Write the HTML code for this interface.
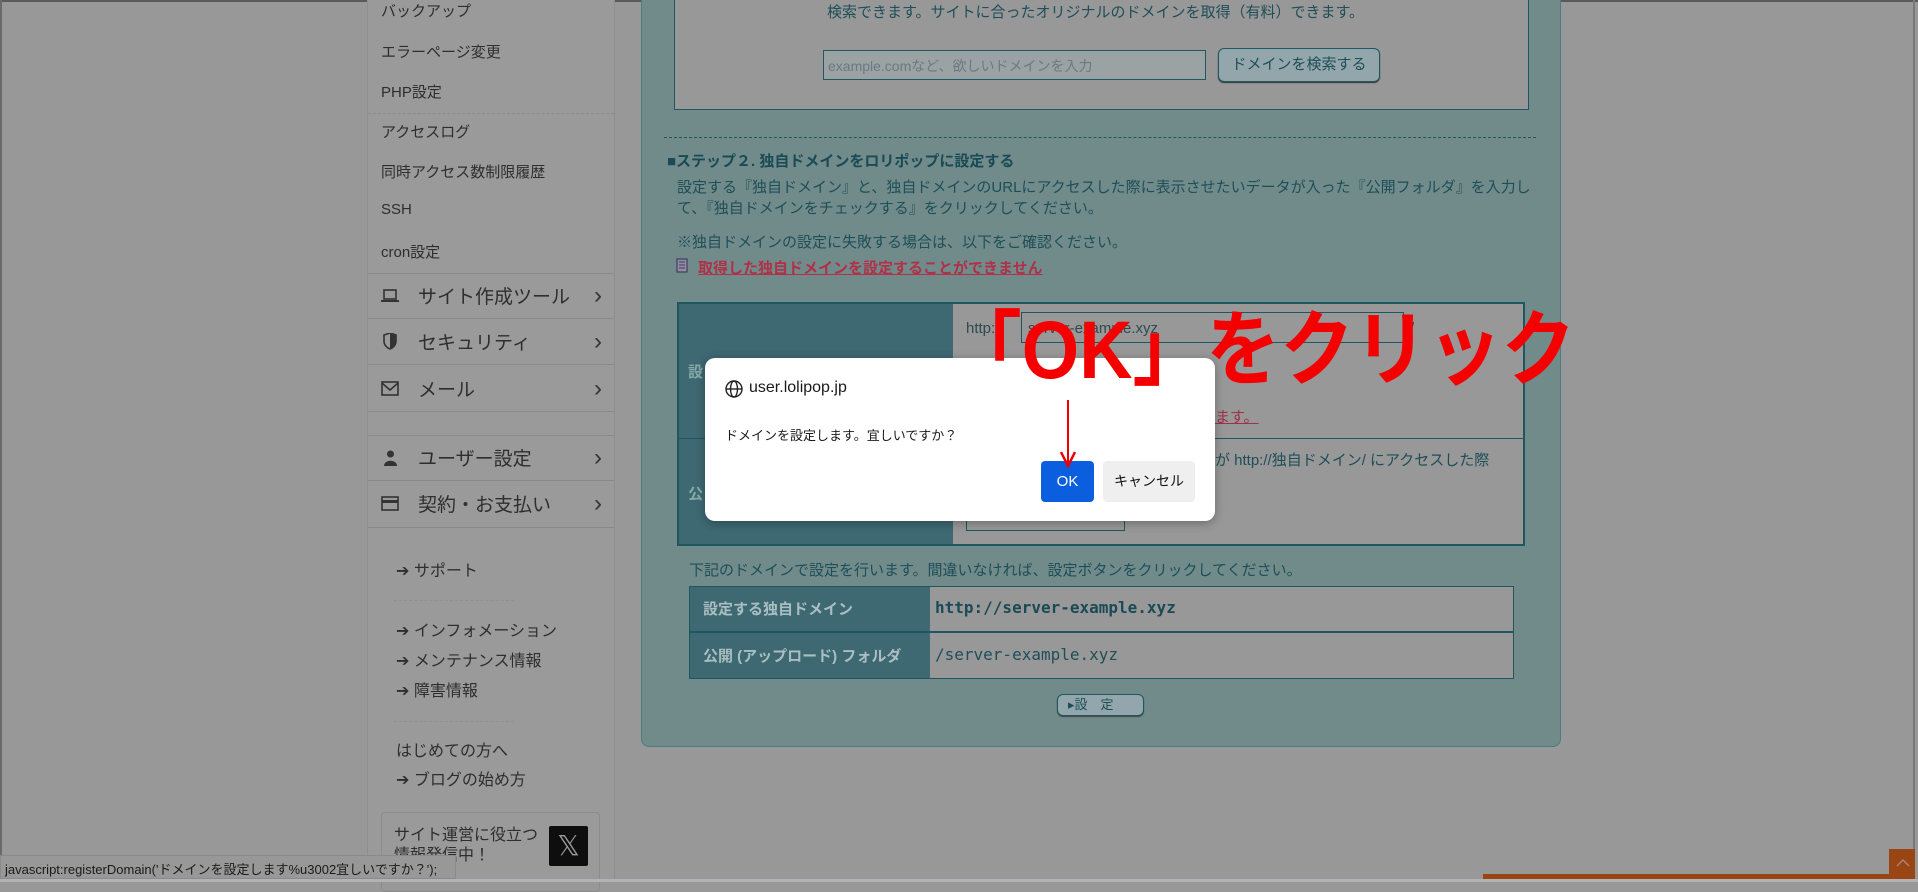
<!DOCTYPE html>
<html><head><meta charset="utf-8"><style>
*{margin:0;padding:0;box-sizing:border-box}
body{width:1918px;height:882px;overflow:hidden;background:#989898;font-family:"Liberation Sans","Noto Sans CJK JP",sans-serif;position:relative;color:#333}
.a{position:absolute;white-space:nowrap}
.side{position:absolute;left:367px;top:0;width:248px;height:882px;background:#9a9a9a;border-left:1px solid #8e8e8e;border-right:1px solid #8e8e8e}
.si{position:absolute;left:13px;font-size:15px;color:#2e2e2e}
.bi{position:absolute;left:50px;font-size:19px;color:#2e2e2e}
.ln{position:absolute;left:0;width:246px;border-top:1px solid #8a8a8a}
.chev{position:absolute;left:226px;font-size:24px;line-height:24px;color:#333}
.sm{position:absolute;left:28px;font-size:16px;color:#2e2e2e}
.dlg{position:absolute;left:705px;top:358px;width:510px;height:163px;background:#fff;border-radius:10px;box-shadow:0 2px 10px rgba(0,0,0,.3)}
</style></head><body>
<div style="position:absolute;left:0;top:0;width:1918px;height:2px;background:#5a5a5a"></div>
<div style="position:absolute;left:0;top:0;width:2px;height:882px;background:#6a6a6a"></div>
<div style="position:absolute;right:3px;top:0;width:2px;height:882px;background:#7a7a7a"></div>
<div class="side">
 <div class="si" style="top:0">バックアップ</div>
 <div class="si" style="top:41px">エラーページ変更</div>
 <div class="si" style="top:81px">PHP設定</div>
 <div class="ln" style="top:113px;border-top:1px dashed #8a8a8a"></div>
 <div class="si" style="top:121px">アクセスログ</div>
 <div class="si" style="top:161px">同時アクセス数制限履歴</div>
 <div class="si" style="top:201px">SSH</div>
 <div class="si" style="top:241px">cron設定</div>
 <div class="ln" style="top:273px"></div>
 <svg class="a" style="left:13px;top:289px" width="18" height="14"><rect x="3" y="1" width="12" height="9" fill="none" stroke="#333" stroke-width="1.6"/><rect x="0" y="11" width="18" height="2" fill="#333"/></svg>
 <div class="bi" style="top:282px">サイト作成ツール</div><div class="chev" style="top:284px">›</div>
 <div class="ln" style="top:318px"></div>
 <svg class="a" style="left:15px;top:333px" width="14" height="17"><path d="M1 2 L7 0 L13 2 L13 8 C13 12 10 15 7 16 C4 15 1 12 1 8Z" fill="none" stroke="#333" stroke-width="1.6"/><path d="M7 1 L13 2.5 L13 8 C13 12 10 15 7 16Z" fill="#333"/></svg>
 <div class="bi" style="top:328px">セキュリティ</div><div class="chev" style="top:330px">›</div>
 <div class="ln" style="top:364px"></div>
 <svg class="a" style="left:13px;top:381px" width="18" height="15"><rect x="1" y="1" width="16" height="13" fill="none" stroke="#333" stroke-width="1.6"/><path d="M1 2 L9 9 L17 2" fill="none" stroke="#333" stroke-width="1.6"/></svg>
 <div class="bi" style="top:375px">メール</div><div class="chev" style="top:377px">›</div>
 <div class="ln" style="top:411px"></div>
 <div class="ln" style="top:435px"></div>
 <svg class="a" style="left:16px;top:450px" width="13" height="16"><circle cx="6.5" cy="4" r="3.5" fill="#333"/><path d="M0 16 C0 9 13 9 13 16Z" fill="#333"/></svg>
 <div class="bi" style="top:444px">ユーザー設定</div><div class="chev" style="top:446px">›</div>
 <div class="ln" style="top:480px"></div>
 <svg class="a" style="left:13px;top:496px" width="18" height="15"><rect x="1" y="1" width="16" height="13" fill="none" stroke="#333" stroke-width="1.6"/><rect x="1" y="4" width="16" height="3" fill="#333"/></svg>
 <div class="bi" style="top:490px">契約・お支払い</div><div class="chev" style="top:492px">›</div>
 <div class="ln" style="top:527px"></div>
 <div class="sm" style="top:557px">➔ サポート</div>
 <div class="ln" style="top:600px;left:26px;width:120px;border-top:1px dashed #909090"></div>
 <div class="sm" style="top:617px">➔ インフォメーション</div>
 <div class="sm" style="top:647px">➔ メンテナンス情報</div>
 <div class="sm" style="top:677px">➔ 障害情報</div>
 <div class="ln" style="top:721px;left:26px;width:120px;border-top:1px dashed #909090"></div>
 <div class="sm" style="top:737px">はじめての方へ</div>
 <div class="sm" style="top:766px">➔ ブログの始め方</div>
 <div class="a" style="left:13px;top:812px;width:219px;height:80px;border:1px solid #8c8c8c;border-radius:4px"></div>
 <div class="a" style="left:26px;top:826px;font-size:16px;line-height:20px;color:#2e2e2e">サイト運営に役立つ<br>情報発信中！</div>
 <div class="a" style="left:181px;top:826px;width:39px;height:40px;background:#0e0e0e;border-radius:2px;color:#9a9a9a;font-size:28px;text-align:center;line-height:40px;font-family:'DejaVu Sans',sans-serif">𝕏</div>
</div>
<!-- main panel -->
<div class="a" style="left:641px;top:-10px;width:920px;height:757px;background:#718b8b;border:1px solid #4d7c80;border-radius:0 0 8px 8px"></div>
<div class="a" style="left:674px;top:-5px;width:855px;height:115px;border:1px solid #1f5660;background:#989898"></div>
<div class="a" style="left:827px;top:1px;font-size:15px;color:#1e4e58">検索できます。サイトに合ったオリジナルのドメインを取得（有料）できます。</div>
<div class="a" style="left:823px;top:50px;width:383px;height:30px;border:1px solid #1f5660;background:#9aa2a4;font-size:14px;color:#6a7a80;padding:5px 4px">example.comなど、欲しいドメインを入力</div>
<div class="a" style="left:1218px;top:48px;width:162px;height:34px;border:1px solid #1f5660;border-radius:6px;background:#93a6ab;font-size:15px;color:#1e4e58;text-align:center;line-height:32px;box-shadow:0 1px 1px #333">ドメインを検索する</div>
<div class="a" style="left:664px;top:137px;width:872px;border-top:1px dashed #1f5660"></div>
<div class="a" style="left:667px;top:150px;font-size:15px;font-weight:bold;color:#1a4a55">■ステップ２. 独自ドメインをロリポップに設定する</div>
<div class="a" style="left:677px;top:177px;font-size:15px;line-height:21px;color:#1e4e58">設定する『独自ドメイン』と、独自ドメインのURLにアクセスした際に表示させたいデータが入った『公開フォルダ』を入力し<br>て、『独自ドメインをチェックする』をクリックしてください。</div>
<div class="a" style="left:677px;top:231px;font-size:15px;color:#1e4e58">※独自ドメインの設定に失敗する場合は、以下をご確認ください。</div>
<svg class="a" style="left:676px;top:258px" width="14" height="17"><rect x="1" y="1" width="10" height="13" fill="#98a" stroke="#345" stroke-width="1.2"/><path d="M3 4h6M3 7h6M3 10h6" stroke="#345"/></svg>
<div class="a" style="left:698px;top:257px;font-size:15px;font-weight:bold;color:#b03048;text-decoration:underline">取得した独自ドメインを設定することができません</div>
<!-- table 1 -->
<div class="a" style="left:677px;top:302px;width:848px;height:244px;border:2px solid #1f5660;background:#989898"></div>
<div class="a" style="left:679px;top:304px;width:274px;height:240px;background:#3e6872"></div>
<div class="a" style="left:679px;top:438px;width:844px;border-top:1px solid #1f5660"></div>
<div class="a" style="left:688px;top:361px;font-size:15px;font-weight:bold;color:#8aa">設</div>
<div class="a" style="left:688px;top:483px;font-size:15px;font-weight:bold;color:#8aa">公</div>
<div class="a" style="left:966px;top:320px;font-size:15px;color:#2e4a50">http://</div>
<div class="a" style="left:1021px;top:312px;width:383px;height:31px;border:1px solid #1f5660"></div>
<div class="a" style="left:1028px;top:320px;font-size:15px;color:#2e4a50">server-example.xyz</div>
<div class="a" style="left:1410px;top:320px;font-size:15px;color:#2e4a50">/</div>
<div class="a" style="left:1215px;top:406px;font-size:15px;color:#a03048;text-decoration:underline">ます。</div>
<div class="a" style="left:1215px;top:449px;font-size:15px;color:#1e4e58">が http://独自ドメイン/ にアクセスした際</div>
<div class="a" style="left:966px;top:500px;width:159px;height:31px;border:1px solid #1f5660"></div>
<div class="a" style="left:689px;top:559px;font-size:15px;color:#1e4e58">下記のドメインで設定を行います。間違いなければ、設定ボタンをクリックしてください。</div>
<!-- table 2 -->
<div class="a" style="left:689px;top:586px;width:825px;height:93px;border:1px solid #1f5660;background:#989898"></div>
<div class="a" style="left:690px;top:587px;width:240px;height:91px;background:#3e6872"></div>
<div class="a" style="left:690px;top:631px;width:823px;border-top:2px solid #1f5660"></div>
<div class="a" style="left:703px;top:598px;font-size:15px;font-weight:bold;color:#a9bfc2">設定する独自ドメイン</div>
<div class="a" style="left:703px;top:645px;font-size:15px;font-weight:bold;color:#a9bfc2">公開 (アップロード) フォルダ</div>
<div class="a" style="left:935px;top:598px;font-size:16px;font-weight:bold;color:#1a4a55;font-family:'DejaVu Sans Mono','Liberation Mono',monospace">http://server-example.xyz</div>
<div class="a" style="left:935px;top:645px;font-size:16px;color:#1e4e58;font-family:'DejaVu Sans Mono','Liberation Mono',monospace">/server-example.xyz</div>
<div class="a" style="left:1057px;top:694px;width:87px;height:22px;border:1px solid #1f5660;border-radius:6px;background:#93a6ab;font-size:13px;color:#1e4e58;line-height:20px;padding-left:10px;box-shadow:0 1px 1px #444">▸設　定</div>
<!-- dialog -->
<div class="dlg">
 <svg class="a" style="left:20px;top:22px" width="18" height="18" viewBox="0 0 18 18" fill="none" stroke="#222" stroke-width="1.4"><circle cx="9" cy="9" r="8"/><ellipse cx="9" cy="9" rx="3.5" ry="8"/><path d="M1 9h16"/></svg>
 <div class="a" style="left:44px;top:21px;font-size:16px;color:#1a1a1a">user.lolipop.jp</div>
 <div class="a" style="left:20px;top:67px;font-size:13px;color:#1a1a1a">ドメインを設定します。宜しいですか？</div>
 <div class="a" style="left:336px;top:103px;width:53px;height:41px;background:#0b5fdf;border-radius:4px;color:#fff;font-size:15px;text-align:center;line-height:41px">OK</div>
 <div class="a" style="left:398px;top:103px;width:92px;height:41px;background:#efefef;border-radius:4px;color:#111;font-size:14px;text-align:center;line-height:41px">キャンセル</div>
</div>
<!-- annotation -->
<div class="a" style="left:948px;top:296px;font-size:82px;line-height:110px;color:#f40000;font-weight:bold;transform:scaleX(0.9);transform-origin:left top">「OK」をクリック</div>
<svg class="a" style="left:1060px;top:400px" width="16" height="68"><path d="M8 0V62" stroke="#e00" stroke-width="2"/><path d="M1 52L8 66L15 52" fill="none" stroke="#e00" stroke-width="2.5"/></svg>
<!-- status -->
<div class="a" style="left:0;top:855px;width:456px;height:24px;background:#989898;border:1px solid #8a8a8a;font-size:13px;color:#1a1a1a;padding:3px 4px">javascript:registerDomain('ドメインを設定します%u3002宜しいですか？');</div>
<div class="a" style="left:1483px;top:874px;width:407px;height:5px;background:#9a4614"></div>
<div class="a" style="left:1889px;top:849px;width:26px;height:30px;background:#9a4614"></div>
<svg class="a" style="left:1896px;top:858px" width="14" height="9"><path d="M1 8L7 2L13 8" fill="none" stroke="#b88" stroke-width="1.2"/></svg>
<div class="a" style="left:0;top:879px;width:1918px;height:3px;background:#b0b4b8"></div>
</body></html>
